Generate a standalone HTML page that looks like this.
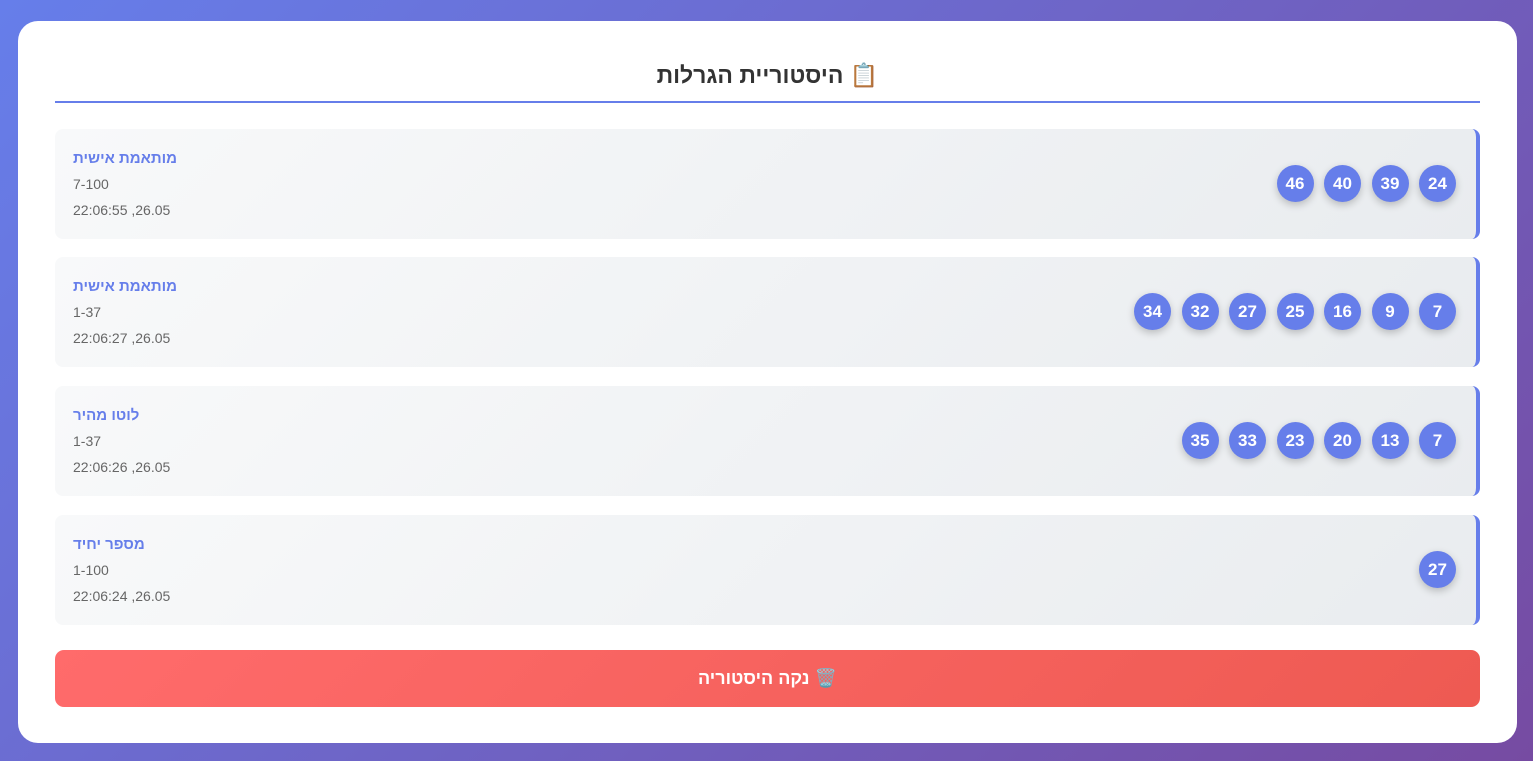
<!DOCTYPE html>
<html><head><meta charset="utf-8"><style>
*{box-sizing:border-box;margin:0;padding:0}
body{width:1533px;height:761px;overflow:hidden;background:linear-gradient(135deg,#667eea,#764ba2);font-family:"Liberation Sans","DejaVu Sans",sans-serif;position:relative}
.wrap{position:absolute;left:18px;top:21px;width:1499px;height:722px;background:#fff;border-radius:20px}
h2{position:absolute;left:37px;width:1425px;top:38px;text-align:center;font-size:23px;font-weight:bold;color:#333;line-height:32px}
.line{position:absolute;left:37px;width:1425px;top:80px;height:2px;background:#667eea}
.card{position:absolute;left:37px;width:1425px;height:110px;border-radius:8px;background:linear-gradient(135deg,#f8f9fa,#e9ecef);border-right:4px solid #667eea}
.info{position:absolute;left:18px;top:21px;direction:ltr}
.t{color:#667eea;font-weight:bold;font-size:15px;line-height:18px;height:21px}
.s{color:#666;font-size:14px;line-height:26px}
.balls{position:absolute;right:20px;top:36px;display:flex;flex-direction:row-reverse;gap:10.5px}
.b{width:37px;height:37px;border-radius:50%;background:#667eea;color:#fff;font-weight:bold;font-size:17px;display:flex;align-items:center;justify-content:center;box-shadow:0 3px 8px rgba(0,0,0,.22)}
.btn{position:absolute;left:37px;width:1425px;top:629px;height:57px;border-radius:9px;background:linear-gradient(135deg,#ff6b6b,#ee5a52);color:#fff;font-weight:bold;font-size:18px;display:flex;align-items:center;justify-content:center}
</style></head><body><div class="wrap">
<h2>היסטוריית הגרלות 📋</h2>
<div class="line"></div>
<div class="card" style="top:108px"><div class="info"><div class="t">מותאמת אישית</div><div class="s">7-100</div><div class="s">22:06:55 ,26.05</div></div>
<div class="balls"><div class="b">24</div><div class="b">39</div><div class="b">40</div><div class="b">46</div></div></div>
<div class="card" style="top:236px"><div class="info"><div class="t">מותאמת אישית</div><div class="s">1-37</div><div class="s">22:06:27 ,26.05</div></div>
<div class="balls"><div class="b">7</div><div class="b">9</div><div class="b">16</div><div class="b">25</div><div class="b">27</div><div class="b">32</div><div class="b">34</div></div></div>
<div class="card" style="top:365px"><div class="info"><div class="t">לוטו מהיר</div><div class="s">1-37</div><div class="s">22:06:26 ,26.05</div></div>
<div class="balls"><div class="b">7</div><div class="b">13</div><div class="b">20</div><div class="b">23</div><div class="b">33</div><div class="b">35</div></div></div>
<div class="card" style="top:494px"><div class="info"><div class="t">מספר יחיד</div><div class="s">1-100</div><div class="s">22:06:24 ,26.05</div></div>
<div class="balls"><div class="b">27</div></div></div>
<div class="btn">נקה היסטוריה 🗑️</div>
</div></body></html>
